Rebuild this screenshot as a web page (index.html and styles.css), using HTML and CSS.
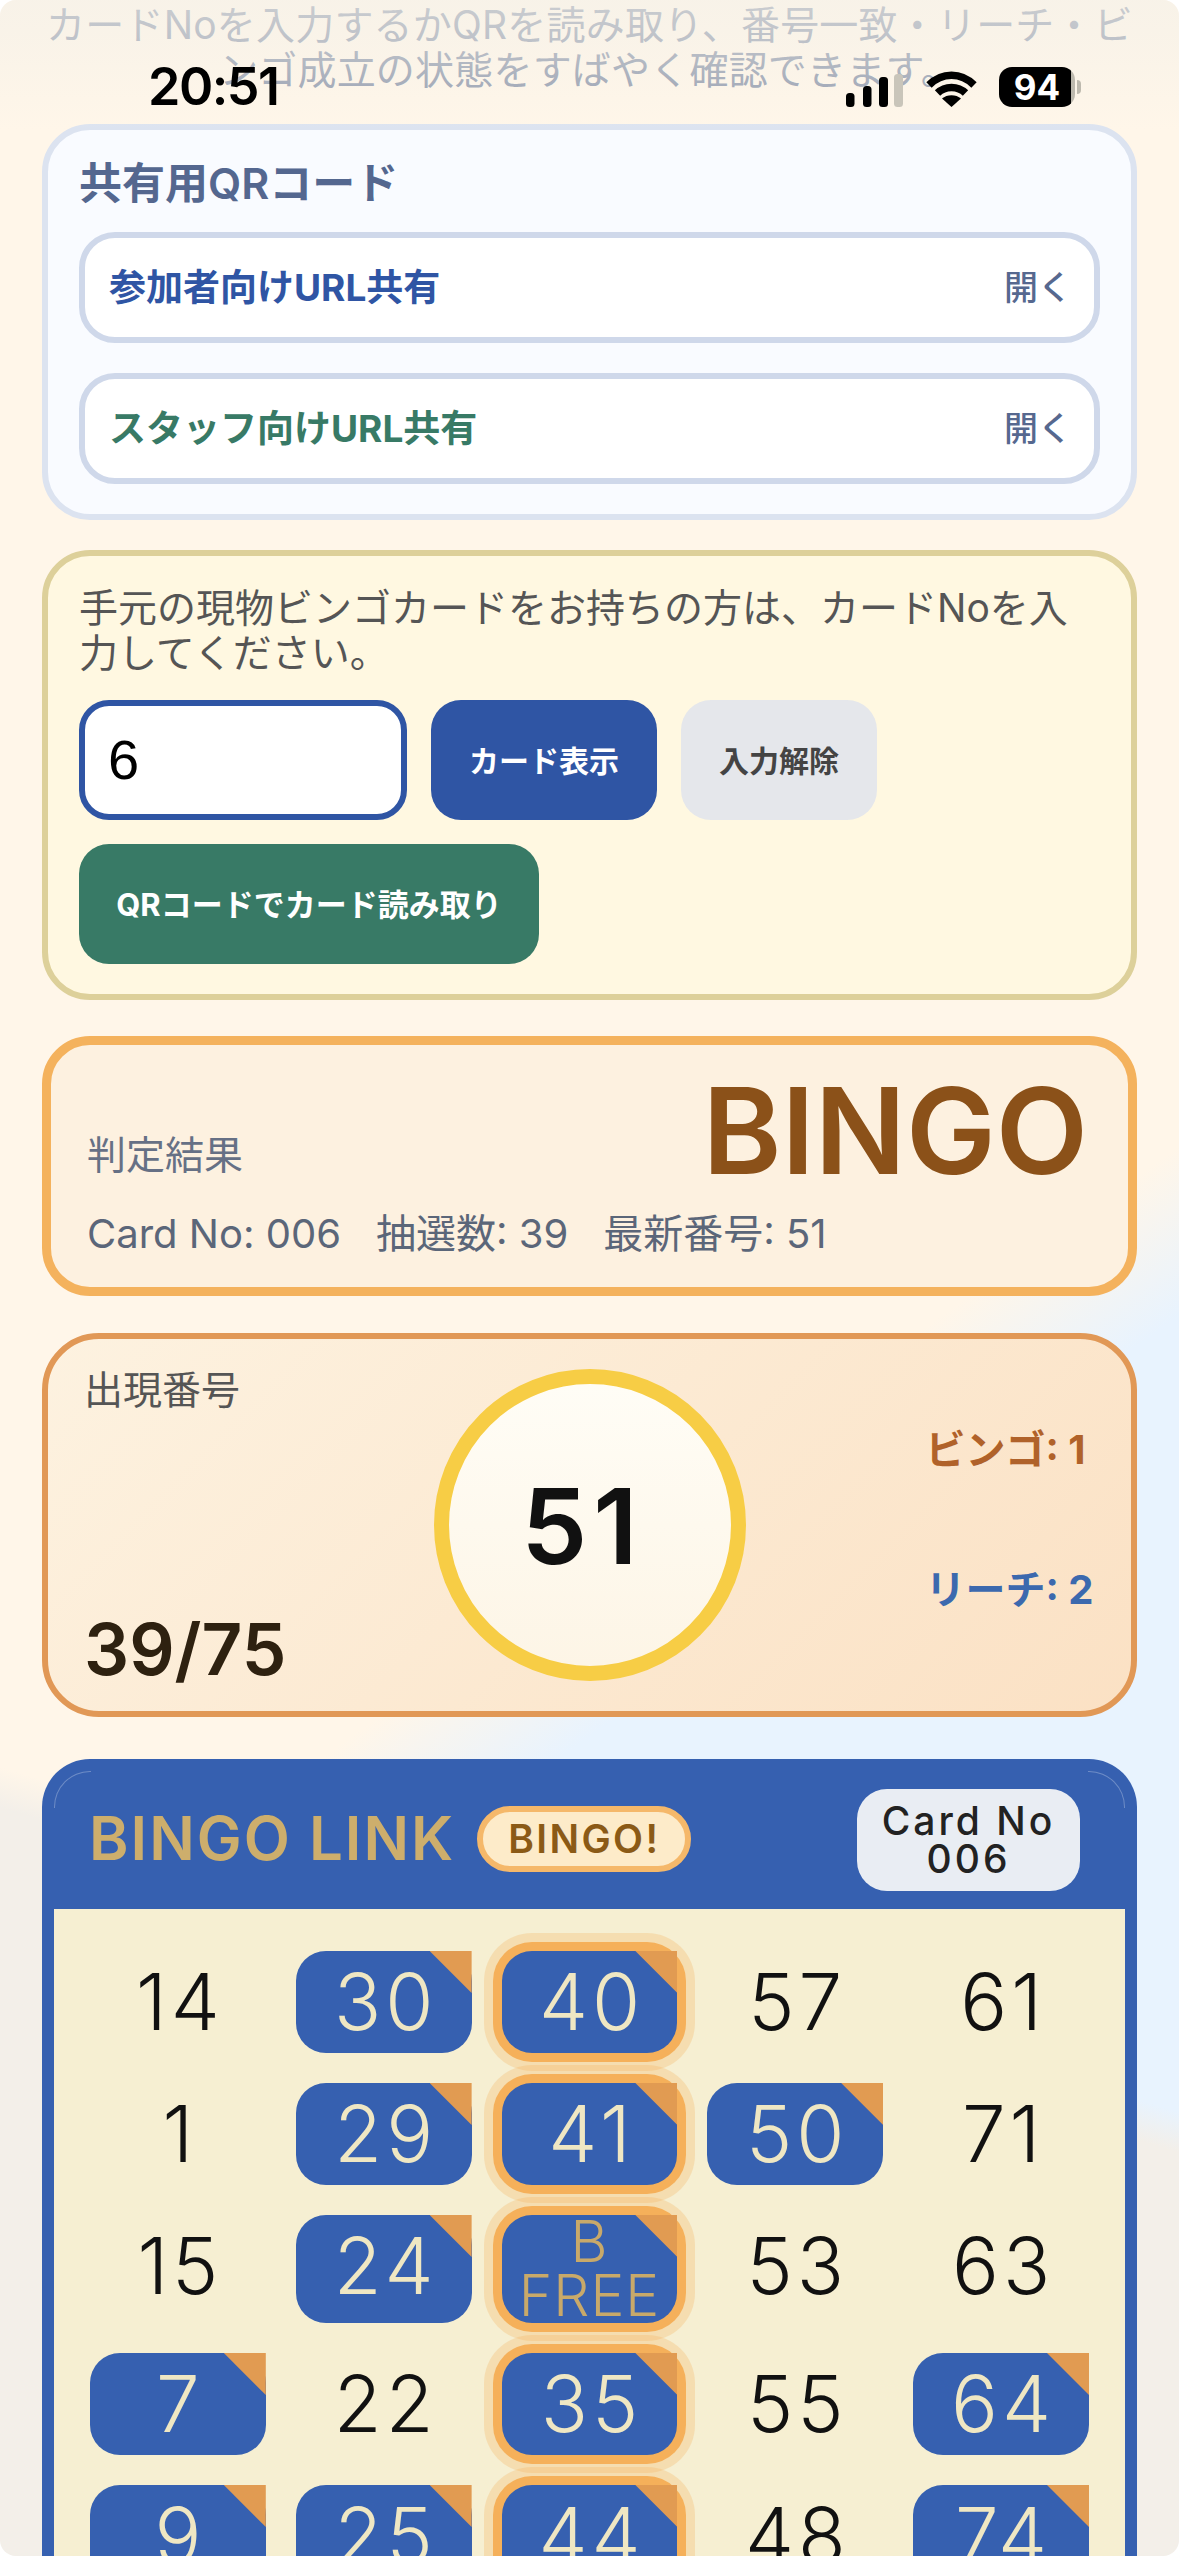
FILE: index.html
```html
<!DOCTYPE html>
<html lang="ja">
<head>
<meta charset="utf-8">
<title>BINGO LINK</title>
<link rel="stylesheet" href="styles.css">
</head>
<body>
<div class="screen">
  <main class="page">
    <p class="intro">カードNoを入力するかQRを読み取り、番号一致・リーチ・ビンゴ成立の状態をすばやく確認できます。</p>

    <section class="panel share">
      <h2 class="share-title">共有用QRコード</h2>
      <div class="share-row"><span class="share-name blue">参加者向けURL共有</span><span class="share-open">開く</span></div>
      <div class="share-row"><span class="share-name green">スタッフ向けURL共有</span><span class="share-open">開く</span></div>
    </section>

    <section class="panel entry">
      <p class="entry-text">手元の現物ビンゴカードをお持ちの方は、カードNoを入力してください。</p>
      <div class="entry-row">
        <div class="field">6</div>
        <button class="btn btn-blue">カード表示</button>
        <button class="btn btn-gray">入力解除</button>
      </div>
      <div class="entry-row">
        <button class="btn btn-green">QRコードでカード読み取り</button>
      </div>
    </section>

    <section class="panel result">
      <div class="result-top">
        <span class="result-label">判定結果</span>
        <span class="result-value">BINGO</span>
      </div>
      <div class="result-meta"><span>Card No: 006</span><span>抽選数: 39</span><span>最新番号: 51</span></div>
    </section>

    <section class="panel draw">
      <div class="draw-left">
        <span class="draw-label">出現番号</span>
        <span class="draw-count">39/75</span>
      </div>
      <div class="ball">51</div>
      <div class="draw-right">
        <span class="stat-bingo">ビンゴ: 1</span>
        <span class="stat-reach">リーチ: 2</span>
      </div>
    </section>

    <section class="card">
      <header class="card-head">
        <span class="brand">BINGO LINK</span>
        <span class="badge">BINGO!</span>
        <span class="card-no">Card No<br>006</span>
      </header>
      <div class="grid">
        <div class="cell">14</div><div class="cell on">30</div><div class="cell on hit">40</div><div class="cell">57</div><div class="cell">61</div>
        <div class="cell">1</div><div class="cell on">29</div><div class="cell on hit">41</div><div class="cell on">50</div><div class="cell">71</div>
        <div class="cell">15</div><div class="cell on">24</div><div class="cell on hit free">B<br>FREE</div><div class="cell">53</div><div class="cell">63</div>
        <div class="cell on">7</div><div class="cell">22</div><div class="cell on hit">35</div><div class="cell">55</div><div class="cell on">64</div>
        <div class="cell on">9</div><div class="cell on">25</div><div class="cell on hit">44</div><div class="cell">48</div><div class="cell on">74</div>
      </div>
    </section>
  </main>

  <div class="status">
    <span class="time">20:51</span>
    <div class="status-icons">
      <svg class="signal" viewBox="0 0 57 33" width="57" height="33" aria-hidden="true">
        <rect x="0" y="19" width="8.5" height="14" rx="3.5" fill="#000"/>
        <rect x="17" y="12" width="8.5" height="21" rx="3.5" fill="#000"/>
        <rect x="33" y="3" width="9" height="30" rx="3.5" fill="#000"/>
        <rect x="48" y="0" width="9" height="33" rx="3.5" fill="#c9c5ba"/>
      </svg>
      <svg class="wifi" viewBox="0 0 51 37" width="51" height="37" aria-hidden="true">
        <path d="M3 15 C16 2 35 2 48 15" fill="none" stroke="#000" stroke-width="7.5"/>
        <path d="M11.5 23 C19 15.5 32 15.5 39.5 23" fill="none" stroke="#000" stroke-width="7.5"/>
        <path d="M25.5 37 L16 28.5 C21 24 30 24 35 28.5 Z" fill="#000"/>
      </svg>
      <div class="battery"><span class="battery-level">94</span></div>
    </div>
  </div>
</div>
</body>
</html>
```

FILE: styles.css
```css
* { box-sizing: border-box; }
html, body { margin: 0; padding: 0; background: #fff; }
body { font-family: "Inter", "Noto Sans CJK JP", sans-serif; }

.screen {
  position: relative;
  width: 1179px;
  height: 2556px;
  overflow: hidden;
  border-radius: 16px;
  background:
    linear-gradient(196.3deg, rgba(243, 239, 233, 0) 72.8%, #f3efe9 74.2%),
    linear-gradient(144.5deg, #fff6e9 58.5%, #e8f3fe 63.5%);
}

.page { padding: 0 42px; }

.intro {
  margin: 0;
  height: 124px;
  padding-top: 2px;
  font-size: 39px;
  line-height: 45px;
  letter-spacing: .2px;
  text-align: center;
  color: #8f99ad;
}

.panel { border-style: solid; border-radius: 48px; }

/* share panel */
.share {
  height: 396px;
  border-width: 6px;
  border-color: #dce3f0;
  background: #f9fbff;
  padding: 28px 31px 0;
}
.share-title {
  margin: 0 0 24px;
  font-size: 43px;
  line-height: 50px;
  font-weight: 600;
  color: #54678f;
}
.share-row {
  display: flex;
  align-items: center;
  justify-content: space-between;
  height: 111px;
  margin-bottom: 30px;
  padding: 0 22px 5px 24px;
  background: #fff;
  border: 6px solid #cfd8ea;
  border-radius: 36px;
}
.share-name { font-size: 37px; font-weight: 700; }
.share-name.blue { color: #2f55a4; }
.share-name.green { color: #387a66; }
.share-open { font-size: 34px; font-weight: 500; color: #56688f; }

/* entry panel */
.entry {
  margin-top: 30px;
  height: 450px;
  border-width: 6px;
  border-color: #ddd09a;
  background: #fff8e1;
  padding: 29px 31px 0;
}
.entry-text {
  margin: 0 0 25px;
  font-size: 39px;
  line-height: 45px;
  color: #555;
}
.entry-row { display: flex; gap: 24px; margin-bottom: 24px; }
.field {
  width: 328px;
  height: 120px;
  padding-left: 23px;
  border: 6px solid #2f55a4;
  border-radius: 30px;
  background: #fff;
  font-family: "Liberation Sans", sans-serif;
  font-size: 56px;
  line-height: 108px;
  color: #000;
}
.btn {
  height: 120px;
  border: 0;
  border-radius: 30px;
  font-family: inherit;
  font-size: 30px;
  font-weight: 700;
  padding: 0 0 3px;
}
.btn-blue { width: 226px; background: #2f55a4; color: #fff; }
.btn-gray { width: 196px; background: #e5e7eb; color: #444; }
.btn-green { width: 460px; background: #387a66; color: #fff; font-size: 31px; }

/* result */
.result {
  margin-top: 36px;
  height: 260px;
  border-width: 9px;
  border-color: #f4b25d;
  background: #fdf1e0;
  padding: 21px 40px 0 36px;
}
.result-top {
  display: flex;
  align-items: flex-end;
  justify-content: space-between;
  height: 130px;
}
.result-label { margin-bottom: 18px; font-size: 39px; line-height: 46px; color: #667085; }
.result-value {
  font-size: 120px;
  line-height: 130px;
  font-weight: 600;
  color: #8b5119;
}
.result-meta {
  display: flex;
  gap: 35px;
  margin-top: 14px;
  font-size: 40px;
  line-height: 48px;
  color: #5b6679;
}

/* drawn number */
.draw {
  display: grid;
  grid-template-columns: 1fr 312px 1fr;
  margin-top: 37px;
  height: 384px;
  border-width: 6px;
  border-color: #e19856;
  border-radius: 57px;
  background: linear-gradient(135deg, #fdf2e0, #fbe1c4);
  padding: 30px 0;
}
.draw-left {
  display: flex;
  flex-direction: column;
  justify-content: space-between;
  padding-left: 36px;
}
.draw-label { margin-top: -2px; font-size: 39px; line-height: 46px; color: #555; }
.draw-count {
  margin-bottom: -5px;
  font-size: 71px;
  line-height: 74px;
  font-weight: 600;
  color: #2e2110;
}
.ball {
  display: flex;
  align-items: center;
  justify-content: center;
  width: 312px;
  height: 312px;
  padding-right: 14px;
  border: 15px solid #f7cd45;
  border-radius: 50%;
  background: linear-gradient(180deg, #fffdf6, #fdf5e6);
  font-size: 105px;
  font-weight: 600;
  letter-spacing: 6px;
  color: #111;
}
.draw-right {
  display: flex;
  flex-direction: column;
  justify-content: center;
  gap: 94px;
  padding: 0 0 10px 180px;
  font-size: 40px;
  line-height: 46px;
  font-weight: 700;
  white-space: nowrap;
}
.stat-bingo { color: #b0622a; }
.stat-reach { color: #3c69ae; }

/* card */
.card {
  margin-top: 42px;
  padding: 12px 12px 0;
  border-radius: 48px 48px 0 0;
  background: #3660b0;
}
.card-head {
  position: relative;
  display: flex;
  align-items: center;
  height: 138px;
  padding: 0 45px 0 35px;
}
.card-head::before,
.card-head::after {
  content: "";
  position: absolute;
  top: 0;
  width: 36px;
  height: 36px;
  border-top: 1px solid rgba(255, 255, 255, .28);
}
.card-head::before {
  left: 0;
  border-left: 1px solid rgba(255, 255, 255, .28);
  border-top-left-radius: 36px;
}
.card-head::after {
  right: 0;
  border-right: 1px solid rgba(255, 255, 255, .28);
  border-top-right-radius: 36px;
}
.brand {
  margin-top: -4px;
  font-size: 60px;
  font-weight: 600;
  letter-spacing: 2px;
  color: #cdae6c;
}
.badge {
  margin: -2px 0 0 22px;
  height: 66px;
  padding: 0 25px;
  border: 6px solid #f5b86a;
  border-radius: 33px;
  background: #fdebc9;
  font-size: 39px;
  line-height: 54px;
  font-weight: 600;
  letter-spacing: 2.4px;
  color: #8b5a16;
}
.card-no {
  margin-left: auto;
  width: 223px;
  height: 102px;
  padding-top: 13px;
  border-radius: 30px;
  background: #e9edf3;
  font-size: 39px;
  line-height: 38px;
  font-weight: 500;
  letter-spacing: 3px;
  text-align: center;
  color: #222;
}

.grid {
  display: grid;
  grid-template-columns: repeat(5, 1fr);
  gap: 30px;
  height: 700px;
  padding: 42px 36px 0;
  background: #f6efd2;
  align-content: start;
}
.cell {
  position: relative;
  min-height: 102px;
  border-radius: 30px;
  font-size: 78px;
  line-height: 102px;
  font-weight: 300;
  letter-spacing: 4px;
  text-indent: 4px;
  text-align: center;
  color: #111;
}
.cell.on { background: #3660b0; color: #efe7c3; }
.cell.on::after {
  content: "";
  position: absolute;
  top: 0;
  right: 0;
  width: 42px;
  height: 42px;
  background: #e19b52;
  clip-path: polygon(0 0, 100% 0, 100% 100%);
}
.cell.hit {
  box-shadow: 0 0 0 9px #f5b05a, 0 0 0 18px rgba(245, 176, 90, .28);
}
.cell.free {
  font-size: 57px;
  line-height: 54px;
  letter-spacing: 1px;
  text-indent: 0;
  color: #c8a96a;
}

/* status bar over the scrolled page */
.status {
  position: absolute;
  top: 0;
  left: 0;
  right: 0;
  height: 130px;
  display: flex;
  justify-content: space-between;
  padding: 62px 104px 0 148px;
  background: linear-gradient(180deg, rgba(243, 240, 232, .6) 0, rgba(243, 240, 232, .45) 45px, rgba(243, 240, 232, 0) 130px);
}
.time {
  font-size: 52px;
  line-height: 50px;
  font-weight: 600;
  letter-spacing: -1.5px;
  color: #000;
}
.status-icons { display: flex; align-items: flex-end; gap: 23px; height: 45px; }
.battery {
  position: relative;
  width: 76px;
  height: 40px;
  margin-left: -1px;
  border-radius: 13px;
  background: linear-gradient(90deg, #000 95%, #bdb9ae 95%);
  text-align: center;
}
.battery::after {
  content: "";
  position: absolute;
  top: 13px;
  right: -6px;
  width: 4px;
  height: 14px;
  border-radius: 0 4px 4px 0;
  background: #bdb9ae;
}
.battery-level {
  font-size: 35px;
  line-height: 40px;
  font-weight: 700;
  color: #fff;
}
```
